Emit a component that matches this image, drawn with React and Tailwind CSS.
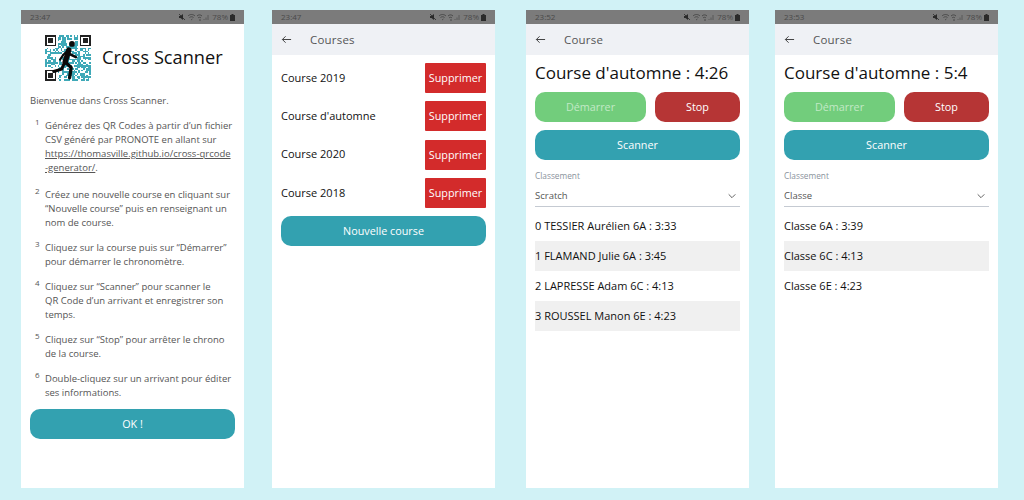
import React from "react";

const FONT = { fontFamily: '"Open Sans", sans-serif' };

function StatusBar({ time }) {
  return (
    <div className="h-[14px] bg-[#7b7b7b] flex items-center justify-between pl-[9px] pr-[9px] text-[8px] text-[#4a4a4a] shrink-0">
      <span>{time}</span>
      <div className="flex items-center gap-[2px]">
        <svg width="32" height="8" viewBox="0 0 32 8" fill="none">
          <path d="M1 3h1.500L5 1v6L2.500 5H1z" fill="#2a2a2a" />
          <path d="M1 1l6 6" stroke="#2a2a2a" strokeWidth="0.8" />
          <path d="M10 3c2-2 5-2 7 0M11.500 4.500c1.300-1 2.800-1 4 0M13 6l.700.700.700-.700" stroke="#444" strokeWidth="0.9" />
          <path d="M19 3c1.500-1.500 3.500-1.500 5 0M20 5c1-1 2-1 3 0M21 7h2" stroke="#444" strokeWidth="0.9" />
          <path d="M26 7V6M28 7V4.500M30 7V2" stroke="#555" strokeWidth="0.9" />
        </svg>
        <span>78%</span>
        <svg width="5" height="7" viewBox="0 0 5 7"><path d="M1.500 0h2v1H5v6H0V1h1.500z" fill="#2a2a2a" /></svg>
      </div>
    </div>
  );
}

function Header({ title, gap }) {
  return (
    <div className="h-[31px] bg-[#eff1f5] flex items-center pl-[9px] shrink-0">
      <svg width="11" height="11" viewBox="0 0 24 24" fill="none" stroke="#333" strokeWidth="2">
        <path d="M22 12H3M10 5l-7 7 7 7" />
      </svg>
      <span className={`text-[11.500px] text-[#555] tracking-[0.2px] ${gap}`}>{title}</span>
    </div>
  );
}

function Btn({ children, className = "" }) {
  return (
    <div className={`h-[30px] rounded-[10px] flex items-center justify-center text-white text-[10.800px] ${className}`}>
      {children}
    </div>
  );
}

// Deterministic QR-like module pattern
const QR_SIZE = 29;
function isFinder(x, y) {
  return (x < 8 && y < 8) || (x > QR_SIZE - 9 && y < 8) || (x < 8 && y > QR_SIZE - 9);
}
const modules = [];
for (let y = 0; y < QR_SIZE; y++) {
  for (let x = 0; x < QR_SIZE; x++) {
    if (isFinder(x, y)) continue;
    const v = Math.sin(x * 12.9898 + y * 78.233) * 43758.5453;
    if (v - Math.floor(v) > 0.5) modules.push([x, y]);
  }
}

function Finder({ x, y }) {
  return (
    <g>
      <rect x={x} y={y} width="7" height="7" fill="#222" />
      <rect x={x + 1} y={y + 1} width="5" height="5" fill="#fff" />
      <rect x={x + 2} y={y + 2} width="3" height="3" fill="#222" />
    </g>
  );
}

function Logo() {
  return (
    <svg width="46" height="46" viewBox="0 0 29 29" shapeRendering="crispEdges" className="shrink-0">
      {modules.map(([x, y]) => (
        <rect key={`${x}-${y}`} x={x} y={y} width="1" height="1" fill="#3fa9b8" />
      ))}
      <Finder x={0} y={0} />
      <Finder x={22} y={0} />
      <Finder x={0} y={22} />
      <g shapeRendering="auto" fill="none" stroke="#0a0a0a" strokeLinecap="round" strokeLinejoin="round">
        <circle cx="17" cy="5.600" r="1.800" fill="#0a0a0a" stroke="none" />
        <path d="M15 9.500L12.700 17" strokeWidth="3.400" />
        <path d="M15 9.500L11.500 12.500L9.500 15.500" strokeWidth="1.300" />
        <path d="M14.500 11.500L19.500 14" strokeWidth="1.600" />
        <path d="M12.500 17L10.500 21.500L5.500 23" strokeWidth="1.900" />
        <path d="M12.700 17L16.500 20.500L15.500 27" strokeWidth="2.100" />
      </g>
    </svg>
  );
}

function Step({ n, children }) {
  return (
    <li className="flex mb-[11px] first:mb-[13px] last:mb-[9px]">
      <span className="w-[15px] shrink-0 text-[8px] leading-[10px] text-[#555] pl-[5px] -mt-[2px]">{n}</span>
      <div>{children}</div>
    </li>
  );
}

function Intro() {
  return (
    <div className="w-[223px] h-[478px] bg-white flex flex-col shrink-0">
      <StatusBar time="23:47" />
      <div className="flex items-center pl-[24px] pt-[11px] gap-[11px]">
        <Logo />
        <span className="text-[18.200px] leading-[25px] text-[#111] mb-[2px]">Cross Scanner</span>
      </div>
      <div className="px-[9px] mt-[13px] text-[9.500px] leading-[14px] text-[#555]">
        <p className="mb-[11px]">Bienvenue dans Cross Scanner.</p>
        <ol>
          <Step n="1">
            Générez des QR Codes à partir d’un fichier<br />
            CSV généré par PRONOTE en allant sur<br />
            <span className="underline">https://thomasville.github.io/cross-qrcode</span><br />
            <span className="underline">-generator/</span>.
          </Step>
          <Step n="2">
            Créez une nouvelle course en cliquant sur<br />
            “Nouvelle course” puis en renseignant un<br />
            nom de course.
          </Step>
          <Step n="3">
            Cliquez sur la course puis sur “Démarrer”<br />
            pour démarrer le chronomètre.
          </Step>
          <Step n="4">
            Cliquez sur “Scanner” pour scanner le<br />
            QR Code d’un arrivant et enregistrer son<br />
            temps.
          </Step>
          <Step n="5">
            Cliquez sur “Stop” pour arrêter le chrono<br />
            de la course.
          </Step>
          <Step n="6">
            Double-cliquez sur un arrivant pour éditer<br />
            ses informations.
          </Step>
        </ol>
        <Btn className="bg-[#33a1b0]">OK !</Btn>
      </div>
    </div>
  );
}

function Courses() {
  const rows = ["Course 2019", "Course d'automne", "Course 2020", "Course 2018"];
  return (
    <div className="w-[223px] h-[478px] bg-white flex flex-col shrink-0 ml-[28px]">
      <StatusBar time="23:47" />
      <Header title="Courses" gap="ml-[18px]" />
      <div className="px-[9px] pt-[8px] flex flex-col gap-[8.300px]">
        {rows.map((r) => (
          <div key={r} className="flex items-center justify-between">
            <span className="text-[11px] text-[#111]">{r}</span>
            <div className="w-[61px] h-[30px] bg-[#d32b2b] rounded-[1px] flex items-center justify-center text-white text-[10.800px]">
              Supprimer
            </div>
          </div>
        ))}
        <Btn className="bg-[#33a1b0]">Nouvelle course</Btn>
      </div>
    </div>
  );
}

function Race({ time, title, select, rows, ml }) {
  return (
    <div className={`w-[223px] h-[478px] bg-white flex flex-col shrink-0 ${ml}`}>
      <StatusBar time={time} />
      <Header title="Course" gap="ml-[18px]" />
      <div className="px-[9px] flex flex-col">
        <div className="text-[17px] leading-[25px] text-[#111] mt-[5px]">{title}</div>
        <div className="flex gap-[9px] mt-[7px]">
          <Btn className="w-[111px] bg-[#72cd7c] !text-[#c2e9c6]">Démarrer</Btn>
          <Btn className="flex-1 bg-[#b63535]">Stop</Btn>
        </div>
        <Btn className="bg-[#33a1b0] mt-[8px]">Scanner</Btn>
        <div className="text-[8.300px] leading-[11px] text-[#8a929c] mt-[10px]">Classement</div>
        <div className="flex items-center justify-between h-[21px] mt-[5px] border-b border-[#c5cad2] pr-[3px]">
          <span className="text-[9.500px] text-[#555]">{select}</span>
          <svg width="10" height="10" viewBox="0 0 24 24" fill="none" stroke="#444" strokeWidth="2">
            <path d="M4 8l8 8 8-8" />
          </svg>
        </div>
        <div className="mt-[4px] flex flex-col">
          {rows.map((r, i) => (
            <div key={r} className={`h-[30px] flex items-center text-[11px] text-[#111] ${i % 2 ? "bg-[#f0f0f0]" : ""}`}>
              {r}
            </div>
          ))}
        </div>
      </div>
    </div>
  );
}

export default function App() {
  return (
    <div style={FONT} className="w-[1024px] h-[500px] bg-[#d1f2f6] flex pl-[21px] pt-[10px] overflow-hidden">
      <Intro />
      <Courses />
      <Race
        ml="ml-[31px]"
        time="23:52"
        title="Course d'automne : 4:26"
        select="Scratch"
        rows={["0 TESSIER Aurélien 6A : 3:33", "1 FLAMAND Julie 6A : 3:45", "2 LAPRESSE Adam 6C : 4:13", "3 ROUSSEL Manon 6E : 4:23"]}
      />
      <Race
        ml="ml-[26px]"
        time="23:53"
        title="Course d'automne : 5:4"
        select="Classe"
        rows={["Classe 6A : 3:39", "Classe 6C : 4:13", "Classe 6E : 4:23"]}
      />
    </div>
  );
}
